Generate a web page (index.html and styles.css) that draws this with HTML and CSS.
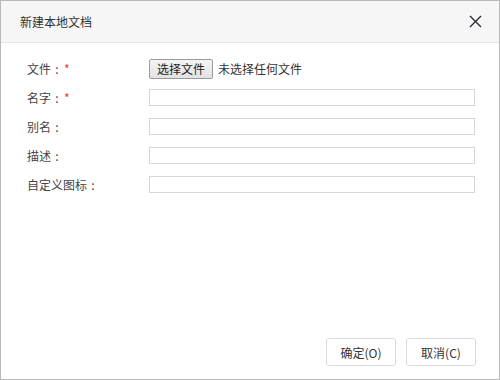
FILE: index.html
```html
<!DOCTYPE html>
<html lang="zh-CN">
<head>
    <meta charset="UTF-8">
    <title>新建本地文档</title>
    <link rel="stylesheet" href="styles.css">
</head>
<body>
    <div class="dialog">
        <div class="dialog-header">
            <span class="dialog-title">新建本地文档</span>
            <button class="btn-close" type="button">
                <svg width="13" height="13" viewBox="0 0 13 13">
                    <path d="M1 1L12 12M12 1L1 12" stroke="#2b2b33" stroke-width="1.4" fill="none"/>
                </svg>
            </button>
        </div>

        <form class="dialog-body">
            <div class="form-row">
                <label>文件<span class="colon">:</span><span class="required">*</span></label>
                <div class="file-field">
                    <button type="button" class="btn-file">选择文件</button>
                    <span class="file-name">未选择任何文件</span>
                </div>
            </div>
            <div class="form-row">
                <label for="name">名字<span class="colon">:</span><span class="required">*</span></label>
                <input type="text" id="name">
            </div>
            <div class="form-row">
                <label for="alias">别名<span class="colon">:</span></label>
                <input type="text" id="alias">
            </div>
            <div class="form-row">
                <label for="desc">描述<span class="colon">:</span></label>
                <input type="text" id="desc">
            </div>
            <div class="form-row">
                <label for="icon">自定义图标<span class="colon">:</span></label>
                <input type="text" id="icon">
            </div>
        </form>

        <div class="dialog-footer">
            <button type="button" class="btn">确定(O)</button>
            <button type="button" class="btn">取消(C)</button>
        </div>
    </div>
</body>
</html>
```

FILE: styles.css
```css
body {
    margin: 0;
    font-family: "Noto Sans CJK SC", "Liberation Sans", sans-serif;
    font-size: 12px;
    color: #333;
}
.dialog {
    width: 500px;
    height: 380px;
    box-sizing: border-box;
    border: 1px solid #b9b9b9;
    display: flex;
    flex-direction: column;
    background: #fff;
}
.dialog-header {
    height: 42px;
    box-sizing: border-box;
    background: #f6f6f6;
    border-bottom: 1px solid #e6e6e6;
    padding: 0 17px 0 19px;
    display: flex;
    align-items: center;
    justify-content: space-between;
}
.dialog-title {
    font-size: 12px;
    color: #333;
}
.btn-close {
    border: none;
    background: none;
    padding: 0;
    width: 13px;
    height: 13px;
    display: flex;
}
.dialog-body {
    flex: 1;
    padding: 11px 0 0 26px;
}
.form-row {
    height: 29px;
    display: flex;
    align-items: center;
}
.form-row label {
    width: 122px;
    color: #444;
}
/* 全角冒号居中 */
.colon {
    display: inline-block;
    width: 12px;
    text-align: center;
}
.required {
    color: #e53935;
    margin-left: 1px;
}
.form-row input {
    width: 326px;
    height: 17px;
    box-sizing: border-box;
    border: 1px solid #d8d6d0;
    padding: 0 4px;
    margin: 0;
}
.file-field {
    display: flex;
    align-items: center;
}
.btn-file {
    width: 64px;
    height: 20px;
    padding: 0;
    font-family: inherit;
    font-size: 12px;
    color: #222;
    background: linear-gradient(#f4f4f4, #e2e2e2);
    border: 1px solid #9a9a9a;
    border-radius: 2px;
}
.file-name {
    margin-left: 5px;
    color: #333;
}
.dialog-footer {
    display: flex;
    justify-content: flex-end;
    gap: 10px;
    padding: 0 23px 13px 0;
}
.btn {
    width: 70px;
    height: 28px;
    font-family: inherit;
    font-size: 12px;
    color: #333;
    background: #fff;
    border: 1px solid #dcdcdc;
    border-radius: 3px;
    padding: 0;
}
```
